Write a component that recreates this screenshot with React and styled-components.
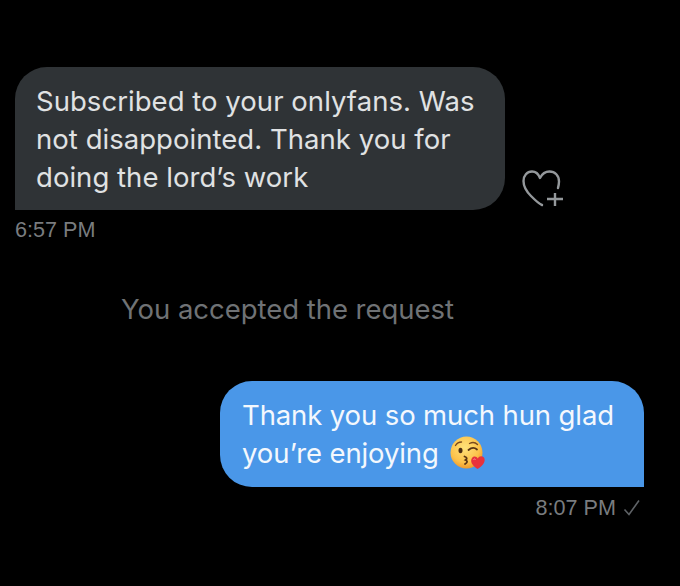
import React from 'react';
import styled, { createGlobalStyle } from 'styled-components';

const GlobalStyle = createGlobalStyle`
  html, body {
    margin: 0;
    padding: 0;
    background: #000;
  }
`;

const Page = styled.div`
  width: 680px;
  height: 586px;
  box-sizing: border-box;
  padding: 67px 36px 0 15px;
  background: #000;
  font-family: Inter, "Liberation Sans", sans-serif;
  display: flex;
  flex-direction: column;
  overflow: hidden;
`;

const IncomingRow = styled.div`
  display: flex;
  align-items: flex-end;
`;

const Bubble = styled.div`
  box-sizing: border-box;
  width: ${({ $width }) => $width}px;
  height: ${({ $height }) => $height}px;
  padding: ${({ $pad }) => $pad};
  font-size: 27.5px;
  line-height: 38px;
  letter-spacing: ${({ $outgoing }) => ($outgoing ? '-0.12px' : '0.04px')};
  color: ${({ $outgoing }) => ($outgoing ? '#f4f8fd' : '#e0e2e3')};
  background: ${({ $outgoing }) => ($outgoing ? '#4a97e8' : '#2f3336')};
  border-radius: ${({ $outgoing }) => ($outgoing ? '32px 32px 0 32px' : '32px 32px 32px 0')};
`;

const HeartButton = styled.div`
  display: flex;
  margin-left: 17px;
`;

const Time = styled.div`
  display: flex;
  align-items: center;
  justify-content: ${({ $right }) => ($right ? 'flex-end' : 'flex-start')};
  gap: 7px;
  margin-top: ${({ $right }) => ($right ? '9px' : '8px')};
  padding-right: ${({ $right }) => ($right ? '3px' : '0')};
  font-family: "Liberation Sans", Arial, sans-serif;
  font-size: 21.6px;
  line-height: 24px;
  color: #797c7f;
`;

const Notice = styled.div`
  margin: 48px 0 53px;
  padding-left: 106px;
  font-size: 27.5px;
  line-height: 38px;
  letter-spacing: -0.03px;
  color: #6f7275;
`;

const Outgoing = styled.div`
  display: flex;
  flex-direction: column;
  align-items: flex-end;
`;

const TimeBlock = styled.div`
  width: 100%;
`;

const Emoji = styled.svg`
  display: inline-block;
  vertical-align: -9px;
  margin-left: 4px;
`;

const HeartPlus = () => (
  <svg width="42" height="40" viewBox="0 0 42 40" fill="none" stroke="#94989b" strokeWidth="2.4" strokeLinecap="round" strokeLinejoin="round">
    <path d="M20 35 C17 34 14 31 9 26 C4 21 1.500 16 1.500 11 C1.500 5.500 5 1.500 10 1.500 C13.500 1.500 16.500 4 18 8 C20 4 23 1.500 27.500 1.500 C33 1.500 37 5.500 37 11.500 C37 13.500 36.500 16 36 18" />
    <path d="M25 29 H41 M33 23 V36" strokeLinecap="butt" />
  </svg>
);

const Check = () => (
  <svg width="18" height="18" viewBox="0 0 18 18" fill="none" stroke="#5e6266" strokeWidth="1.6">
    <path d="M1.500 10.500 L6 15.500 L16 1.500" />
  </svg>
);

const KissEmoji = () => (
  <Emoji width="36" height="36" viewBox="0 0 36 36">
    <defs>
      <radialGradient id="face" cx="45%" cy="35%" r="65%">
        <stop offset="0%" stopColor="#ffe27a" />
        <stop offset="70%" stopColor="#fcc24a" />
        <stop offset="100%" stopColor="#ee9a2c" />
      </radialGradient>
    </defs>
    <circle cx="16.500" cy="16.500" r="16" fill="url(#face)" />
    <path d="M5.500 9.500 Q7.500 6 11.500 6" fill="none" stroke="#7a4a1c" strokeWidth="1.400" strokeLinecap="round" />
    <path d="M19.500 7.500 Q24 5 27.500 8.500" fill="none" stroke="#7a4a1c" strokeWidth="1.400" strokeLinecap="round" />
    <ellipse cx="10.500" cy="14.500" rx="2" ry="2.800" fill="#4a2c12" />
    <path d="M18.500 14 Q23 10 27 13.500" fill="none" stroke="#5a3514" strokeWidth="1.800" strokeLinecap="round" />
    <path d="M14.500 20.500 Q18.500 22 15.500 24 Q19 25.500 15 28" fill="none" stroke="#5a3514" strokeWidth="1.800" strokeLinecap="round" />
    <path d="M27.500 33 C21.500 29 20 25 22 22 C24 19.500 26.800 20.500 27.800 22.500 C29 20 32 19.500 34 21.500 C36 24.500 33.500 30 27.500 33 Z" fill="#e8323c" />
    <path d="M23.500 23.500 Q24.500 22.500 25.500 23.500" fill="none" stroke="#ff9aa0" strokeWidth="1" />
  </Emoji>
);

export default function App() {
  return (
    <Page>
      <GlobalStyle />
      <IncomingRow>
        <Bubble $width={490} $height={143} $pad="15px 20px 0 21px">
          Subscribed to your onlyfans. Was not disappointed. Thank you for doing the lord’s work
        </Bubble>
        <HeartButton>
          <HeartPlus />
        </HeartButton>
      </IncomingRow>
      <Time>6:57 PM</Time>
      <Notice>You accepted the request</Notice>
      <Outgoing>
        <Bubble $width={424} $height={106} $pad="15px 20px 0 22px" $outgoing>
          Thank you so much hun glad you’re enjoying <KissEmoji />
        </Bubble>
        <TimeBlock>
          <Time $right>
            8:07 PM
            <Check />
          </Time>
        </TimeBlock>
      </Outgoing>
    </Page>
  );
}
